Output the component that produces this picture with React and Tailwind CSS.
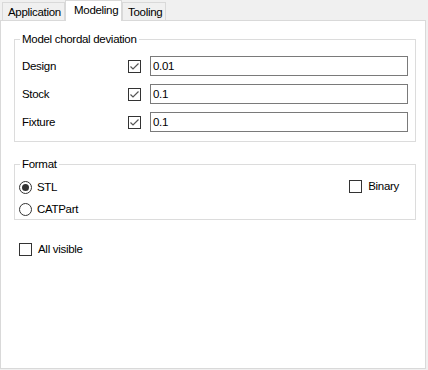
import React from "react";

function Check({ checked }) {
  return (
    <div className="w-[13px] h-[13px] border border-[#333333] bg-white flex items-center justify-center shrink-0">
      {checked && (
        <svg width="11" height="11" viewBox="0 0 11 11">
          <polyline points="1.5,5.5 4,8 9.5,2.5" fill="none" stroke="#555555" strokeWidth="1.2" />
        </svg>
      )}
    </div>
  );
}

function Radio({ checked }) {
  return (
    <div className="w-[13px] h-[13px] rounded-full border border-[#333333] bg-white flex items-center justify-center shrink-0">
      {checked && <div className="w-[7px] h-[7px] rounded-full bg-[#333333]" />}
    </div>
  );
}

function Row({ label, value }) {
  return (
    <div className="flex items-center h-[20px]">
      <div className="w-[106px]">{label}</div>
      <Check checked />
      <div className="ml-[9px] w-[258px] h-[20px] border border-[#7a7a7a] bg-white pl-[2px] flex items-center">
        {value}
      </div>
    </div>
  );
}

export default function App() {
  return (
    <div
      className="w-[428px] h-[370px] bg-[#f0f0f0] text-[11.5px] tracking-[-0.3px] text-black leading-[14px]"
      style={{ fontFamily: '"Liberation Sans", Arial, sans-serif' }}
    >
      <div className="flex items-end h-[20px] pl-[2px]">
        <div className="w-[63px] h-[18px] border border-b-0 border-[#d9d9d9] bg-[#f0f0f0] pl-[5px] flex items-center">
          Application
        </div>
        <div className="relative z-10 w-[57px] h-[21px] -mb-px border border-b-0 border-[#d9d9d9] bg-white pl-[8px] pt-[2px]">
          Modeling
        </div>
        <div className="w-[44px] h-[18px] border border-b-0 border-[#d9d9d9] bg-[#f0f0f0] pl-[5px] flex items-center">
          Tooling
        </div>
      </div>
      <div className="w-[426px] h-[349px] border border-[#d9d9d9] bg-white pl-[13px] pt-[11px]">
        <fieldset className="w-[402px] h-[110px] border border-[#dcdcdc]">
          <legend className="ml-[5px] px-[2px] leading-[14px]">Model chordal deviation</legend>
          <div className="mt-[10px] pl-[7px] flex flex-col gap-[8px]">
            <Row label="Design" value="0.01" />
            <Row label="Stock" value="0.1" />
            <Row label="Fixture" value="0.1" />
          </div>
        </fieldset>
        <fieldset className="mt-[15px] w-[402px] h-[63px] border border-[#dcdcdc]">
          <legend className="ml-[5px] px-[2px] leading-[14px]">Format</legend>
          <div className="mt-[8px] pl-[4px] flex flex-col gap-[6px]">
            <div className="flex items-center h-[16px]">
              <Radio checked />
              <span className="ml-[5px]">STL</span>
              <div className="ml-auto mr-[16px] flex items-center -mt-[2px]">
                <Check />
                <span className="ml-[6px]">Binary</span>
              </div>
            </div>
            <div className="flex items-center h-[16px]">
              <Radio />
              <span className="ml-[5px]">CATPart</span>
            </div>
          </div>
        </fieldset>
        <div className="mt-[21px] ml-[5px] flex items-center h-[16px]">
          <Check />
          <span className="ml-[6px]">All visible</span>
        </div>
      </div>
    </div>
  );
}
